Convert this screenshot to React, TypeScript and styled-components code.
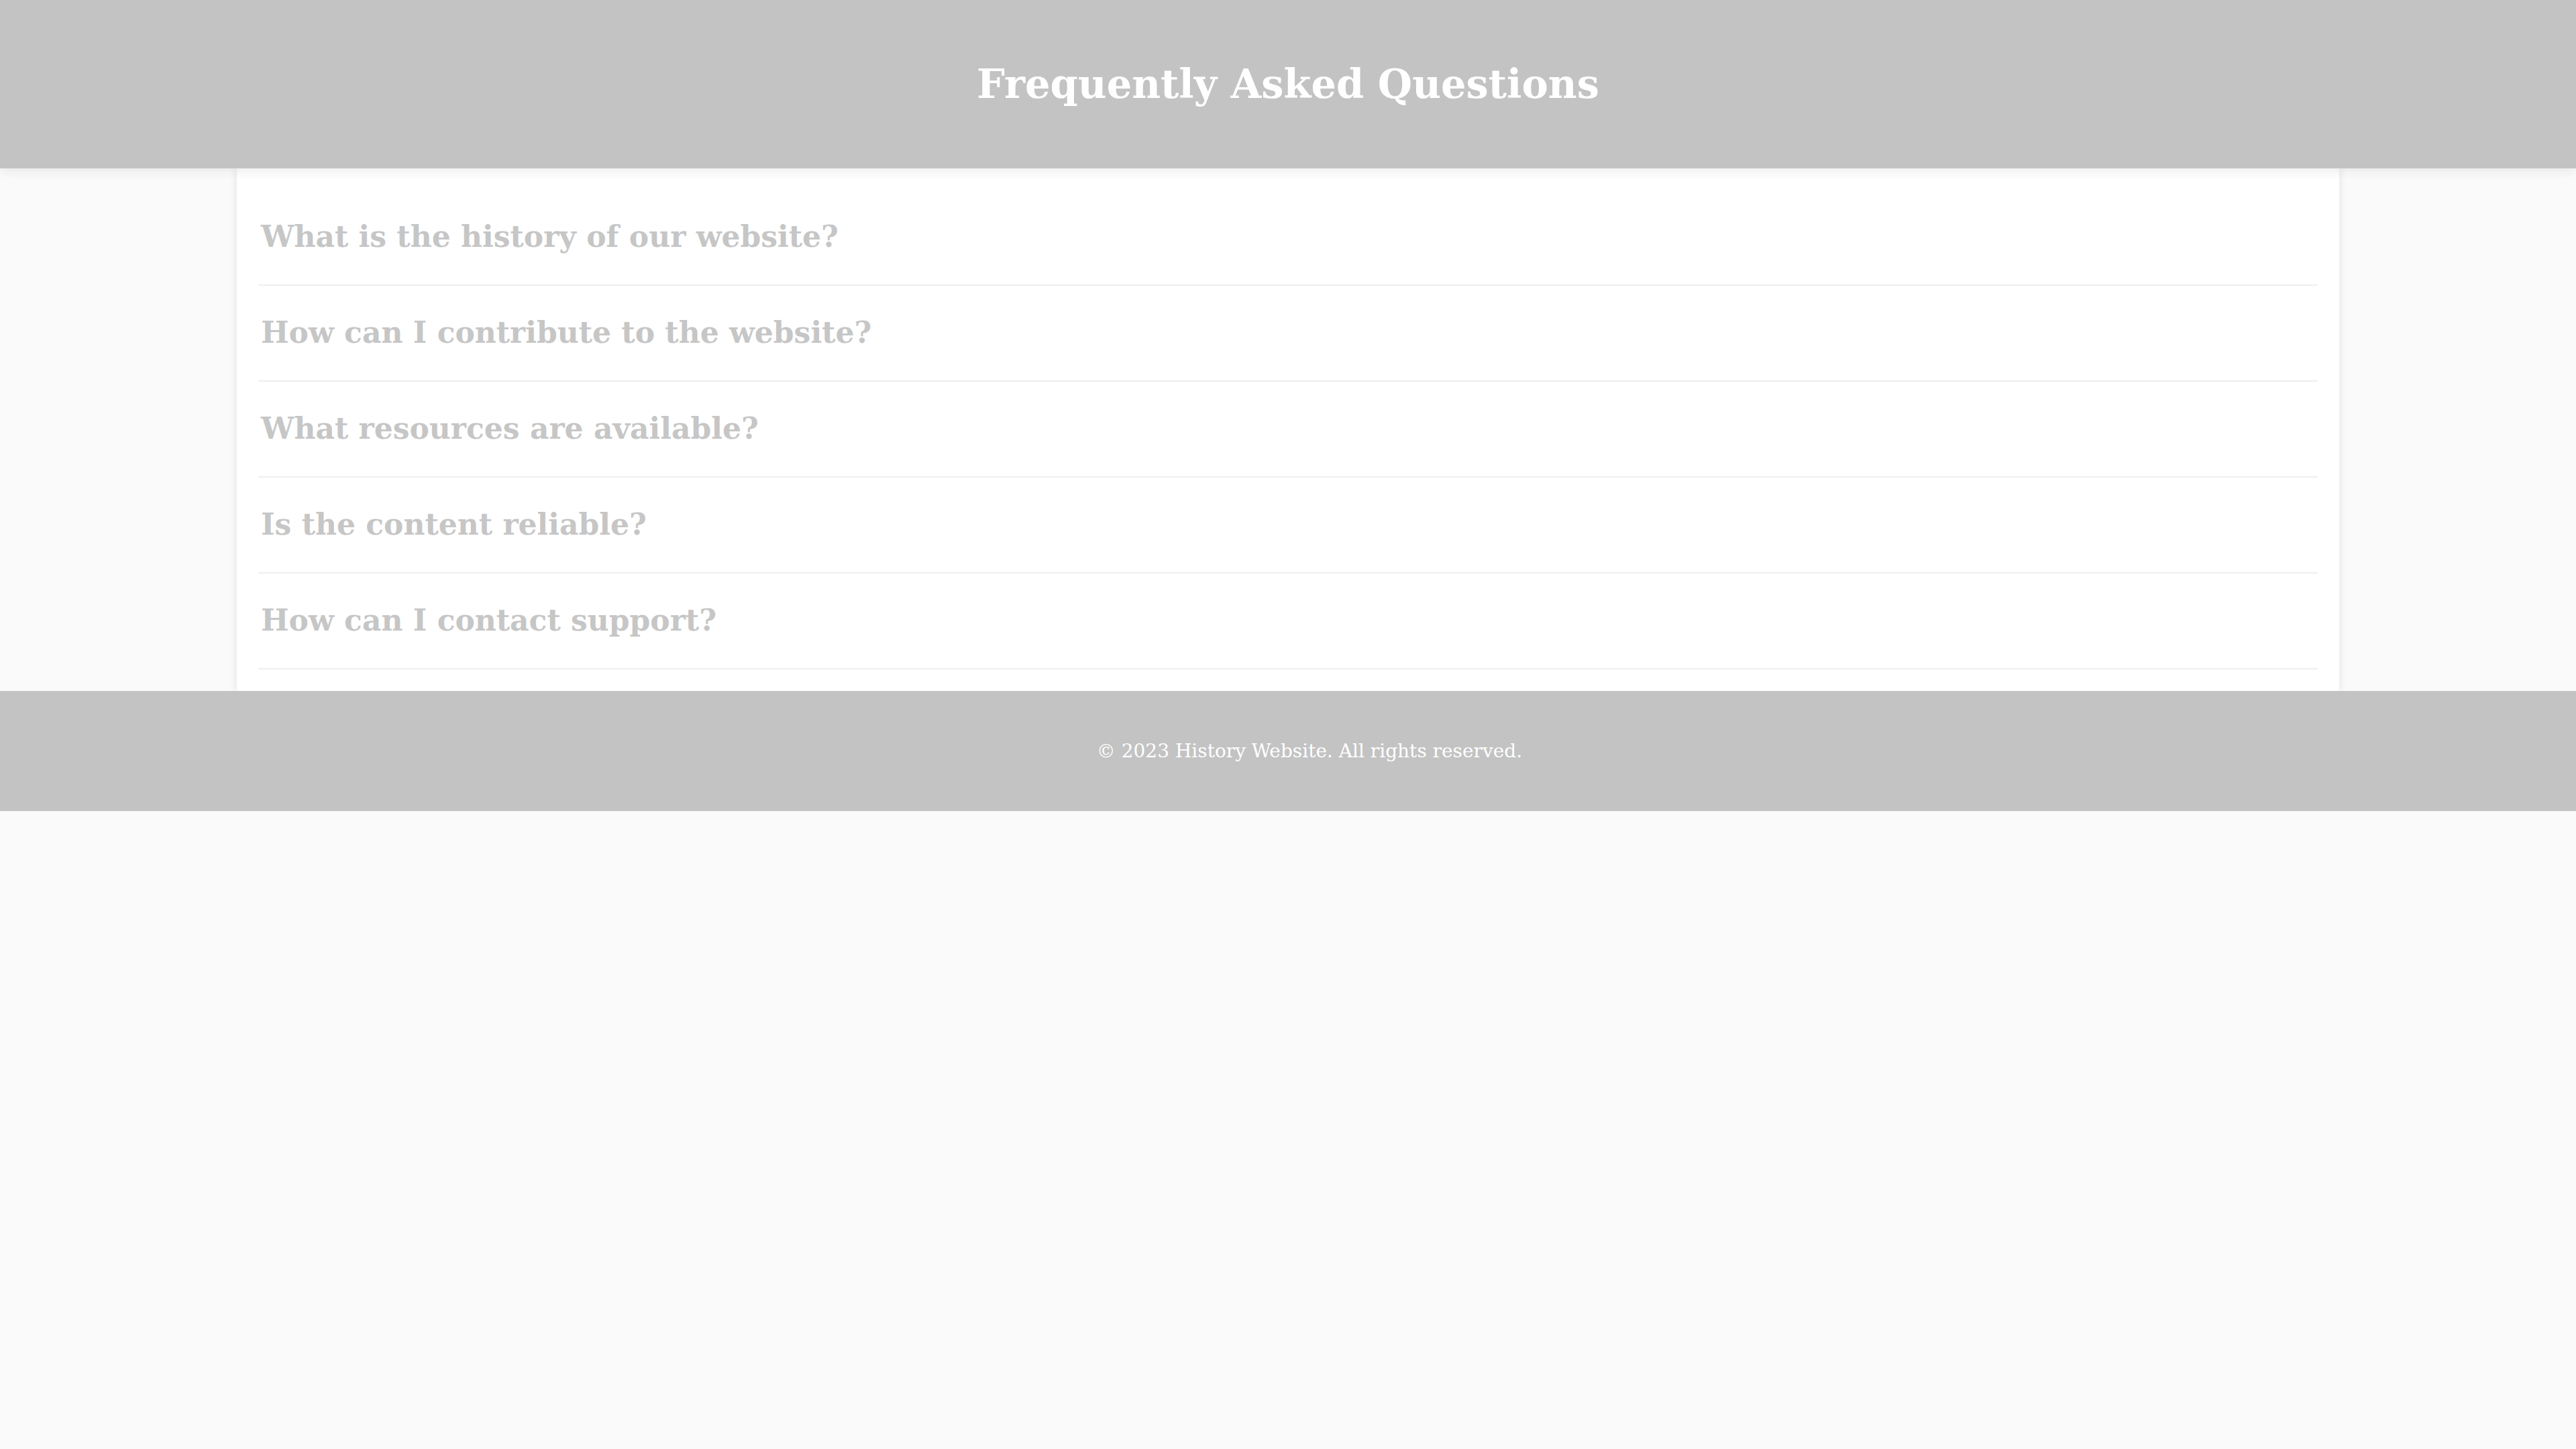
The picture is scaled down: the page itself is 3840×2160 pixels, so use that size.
import React from 'react';
import styled, { createGlobalStyle } from 'styled-components';

const GlobalStyle = createGlobalStyle`
  html, body {
    margin: 0;
    padding: 0;
    background: #fafafa;
    font-family: 'DejaVu Serif', 'Liberation Serif', serif;
  }
`;

// Шапка страницы
const Header = styled.header`
  background: #c3c3c3;
  height: 251px;
  display: flex;
  align-items: center;
  justify-content: center;
  box-shadow: 0 4px 16px rgba(0, 0, 0, 0.08);
  position: relative;
  z-index: 1;
`;

const Title = styled.h1`
  margin: 0;
  color: #ffffff;
  font-size: 59px;
  font-weight: 700;
  line-height: 74px;
`;

// Белая колонка с вопросами
const Main = styled.main`
  width: 3134px;
  margin: 0 auto;
  background: #ffffff;
  padding: 32px;
  box-sizing: border-box;
  box-shadow: 0 0 12px rgba(0, 0, 0, 0.1);
`;

const QuestionItem = styled.div`
  padding: 42px 4px 43px;
  border-bottom: 2px solid #eeeeee;
`;

const Question = styled.h2`
  margin: 0;
  color: #c6c6c6;
  font-size: 44px;
  font-weight: 700;
  line-height: 56px;
`;

const Footer = styled.footer`
  background: #c3c3c3;
  height: 179px;
  padding-left: 64px;
  display: flex;
  align-items: center;
  justify-content: center;
`;

const FooterText = styled.p`
  margin: 0;
  color: #ffffff;
  font-size: 28px;
`;

const questions = [
  'What is the history of our website?',
  'How can I contribute to the website?',
  'What resources are available?',
  'Is the content reliable?',
  'How can I contact support?',
];

export default function App() {
  return (
    <>
      <GlobalStyle />
      <Header>
        <Title>Frequently Asked Questions</Title>
      </Header>
      <Main>
        {questions.map((q) => (
          <QuestionItem key={q}>
            <Question>{q}</Question>
          </QuestionItem>
        ))}
      </Main>
      <Footer>
        <FooterText>© 2023 History Website. All rights reserved.</FooterText>
      </Footer>
    </>
  );
}
